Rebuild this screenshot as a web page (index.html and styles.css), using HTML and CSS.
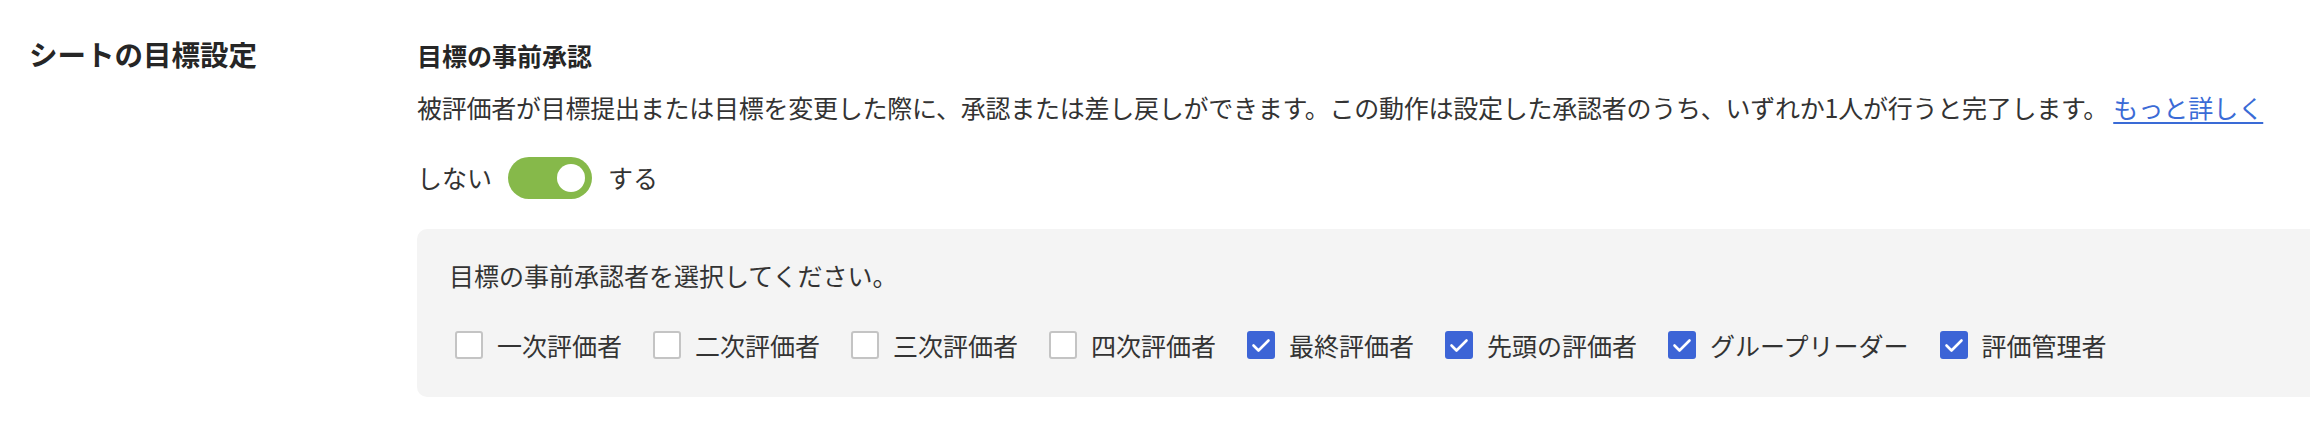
FILE: index.html
```html
<!DOCTYPE html>
<html lang="ja">
<head>
<meta charset="utf-8">
<title>シートの目標設定</title>
<link rel="stylesheet" href="styles.css">
</head>
<body>
<div class="page">
  <div class="row">
    <div class="label-col">
      <h2 class="section-title">シートの目標設定</h2>
    </div>
    <div class="content">
      <h3 class="setting-title">目標の事前承認</h3>
      <p class="desc">被評価者が目標提出または目標を変更した際に、承認または差し戻しができます。この動作は設定した承認者のうち、いずれか1人が行うと完了します。 <a class="link" href="#">もっと詳しく</a></p>
      <div class="toggle-row">
        <span class="toggle-label">しない</span>
        <span class="switch is-on"><span class="knob"></span></span>
        <span class="toggle-label">する</span>
      </div>
      <div class="panel">
        <p class="panel-text">目標の事前承認者を選択してください。</p>
        <div class="checks">
          <label class="check"><span class="box"></span><span class="check-label">一次評価者</span></label>
          <label class="check"><span class="box"></span><span class="check-label">二次評価者</span></label>
          <label class="check"><span class="box"></span><span class="check-label">三次評価者</span></label>
          <label class="check"><span class="box"></span><span class="check-label">四次評価者</span></label>
          <label class="check"><span class="box is-checked"><svg viewBox="0 0 28 28" width="28" height="28"><polyline points="6.5,14.5 11.5,19.5 21.5,9.5" fill="none" stroke="#fff" stroke-width="2.6" stroke-linecap="round" stroke-linejoin="round"/></svg></span><span class="check-label">最終評価者</span></label>
          <label class="check"><span class="box is-checked"><svg viewBox="0 0 28 28" width="28" height="28"><polyline points="6.5,14.5 11.5,19.5 21.5,9.5" fill="none" stroke="#fff" stroke-width="2.6" stroke-linecap="round" stroke-linejoin="round"/></svg></span><span class="check-label">先頭の評価者</span></label>
          <label class="check"><span class="box is-checked"><svg viewBox="0 0 28 28" width="28" height="28"><polyline points="6.5,14.5 11.5,19.5 21.5,9.5" fill="none" stroke="#fff" stroke-width="2.6" stroke-linecap="round" stroke-linejoin="round"/></svg></span><span class="check-label">グループリーダー</span></label>
          <label class="check"><span class="box is-checked"><svg viewBox="0 0 28 28" width="28" height="28"><polyline points="6.5,14.5 11.5,19.5 21.5,9.5" fill="none" stroke="#fff" stroke-width="2.6" stroke-linecap="round" stroke-linejoin="round"/></svg></span><span class="check-label">評価管理者</span></label>
        </div>
      </div>
    </div>
  </div>
</div>
</body>
</html>
```

FILE: styles.css
```css
html, body {
  margin: 0;
  padding: 0;
  background: #ffffff;
}

body {
  font-family: "Noto Sans CJK JP", "Noto Sans", sans-serif;
  color: #333333;
  font-size: 25px;
  line-height: 37.5px;
  overflow: hidden;
}

.page {
  padding: 37px 0 0 29px;
  overflow: hidden;
}

.row {
  display: flex;
  align-items: flex-start;
}

.label-col {
  flex: none;
  width: 388px;
}

.section-title {
  margin: 0;
  font-size: 28.5px;
  line-height: 34px;
  font-weight: 700;
  color: #262626;
}

.content {
  flex: 1;
  min-width: 0;
  margin-right: -20px;
}

.setting-title {
  margin: 0;
  font-size: 25px;
  line-height: 37.5px;
  font-weight: 700;
  color: #262626;
}

.desc {
  margin: 14px 0 0;
  white-space: nowrap;
  letter-spacing: -0.25px;
}

.link {
  color: #3a6bd6;
  text-decoration: underline;
  text-underline-offset: 4px;
  text-decoration-thickness: 2px;
  letter-spacing: 0;
}

.toggle-row {
  margin-top: 31px;
  display: flex;
  align-items: center;
  gap: 16px;
  height: 42px;
}

.switch {
  position: relative;
  display: block;
  width: 84px;
  height: 42px;
  border-radius: 21px;
  background: #86b94a;
}

.knob {
  position: absolute;
  top: 7px;
  right: 7px;
  width: 28px;
  height: 28px;
  border-radius: 50%;
  background: #ffffff;
}

.panel {
  margin-top: 30px;
  background: #f4f4f4;
  border-radius: 10px;
  padding: 28px 32px 33px;
}

.panel-text {
  margin: 0;
}

.checks {
  margin-top: 32px;
  padding-left: 6px;
  display: flex;
  align-items: center;
  gap: 31px;
}

.check {
  display: flex;
  align-items: center;
  gap: 14px;
}

.box {
  flex: none;
  box-sizing: border-box;
  width: 28px;
  height: 28px;
  border: 2px solid #c4c4c4;
  border-radius: 3px;
  background: #ffffff;
}

.box.is-checked {
  border: none;
  background: #3c64d6;
}

.box svg {
  display: block;
}

.check-label {
  white-space: nowrap;
}
```
